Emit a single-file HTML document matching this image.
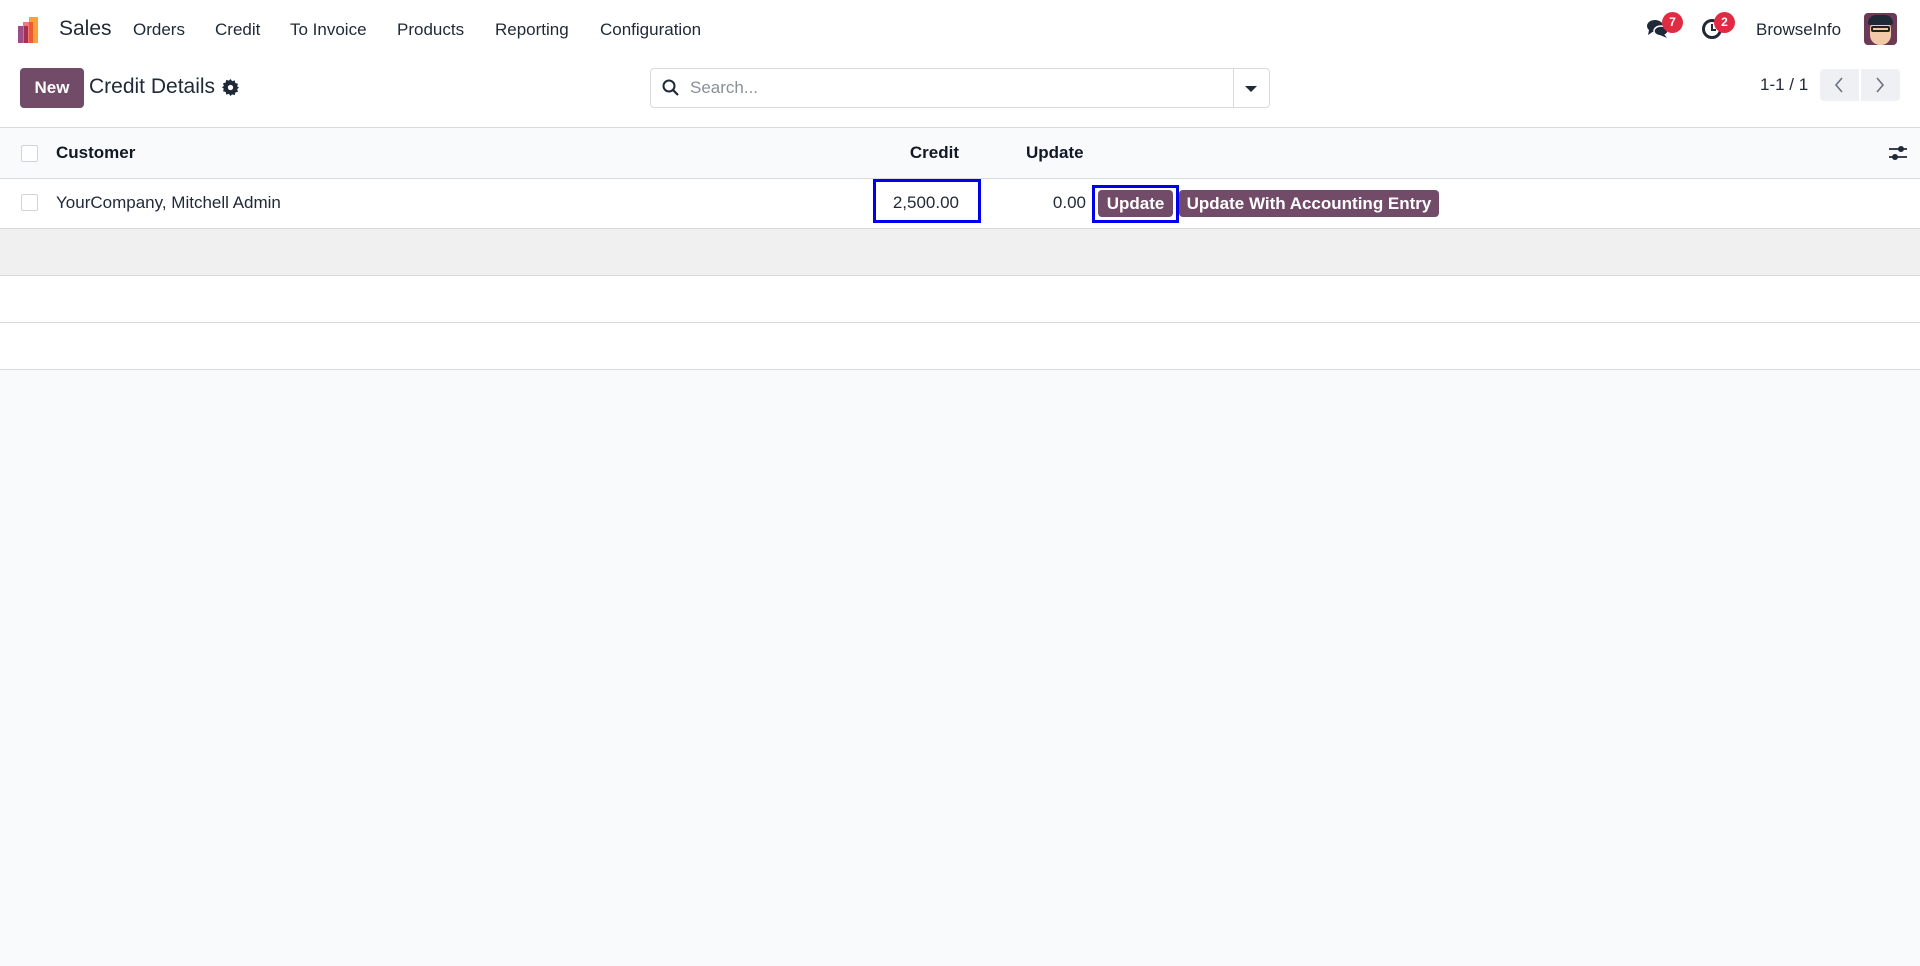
<!DOCTYPE html>
<html><head><meta charset="utf-8"><style>
*{box-sizing:border-box;margin:0;padding:0}
body{width:1920px;height:966px;background:#f9fafb;font-family:"Liberation Sans",sans-serif;color:#1f2937;position:relative;overflow:hidden}
.abs{position:absolute}
.top{left:0;top:0;width:1920px;height:128px;background:#fff;border-bottom:1px solid #d8dadd}
.nav{font-size:17px;color:#1f2937;top:20px}
.btn{background:#714b67;color:#fff;border-radius:4px;font-weight:bold}
.row{left:0;width:1920px;border-bottom:1px solid #d8dadd}
.cb{width:17px;height:17px;border:1px solid #d1d5db;border-radius:2px;background:#fff}
.badge{background:#e02c43;color:#fff;border-radius:50%;width:21px;height:21px;font-size:12px;font-weight:bold;text-align:center;line-height:21px}
</style></head><body>
<div class="abs top"></div>
<svg class="abs" style="left:18px;top:15px" width="30" height="30" viewBox="0 0 30 30">
<rect x="0" y="11" width="9" height="17" fill="#9b4f86"/>
<rect x="5" y="7" width="9" height="21" fill="#f06a6a" opacity=".9"/>
<rect x="11" y="2" width="9" height="26" fill="#f7a13b"/>
<rect x="6" y="11" width="4" height="17" fill="#a4324f"/>
<rect x="11" y="7" width="4" height="21" fill="#ef5a2f"/>
</svg>
<div class="abs" style="left:59px;top:17px;font-size:21px">Sales</div>
<div class="abs nav" style="left:133px">Orders</div>
<div class="abs nav" style="left:215px">Credit</div>
<div class="abs nav" style="left:290px">To Invoice</div>
<div class="abs nav" style="left:397px">Products</div>
<div class="abs nav" style="left:495px">Reporting</div>
<div class="abs nav" style="left:600px">Configuration</div>
<svg class="abs" style="left:1646px;top:18px" width="24" height="22" viewBox="0 0 24 22"><ellipse cx="9" cy="8" rx="8" ry="6" fill="#1f2937"/><path d="M3 12 L2 17 L8 13Z" fill="#1f2937"/><ellipse cx="15" cy="13" rx="7" ry="5" fill="#1f2937" stroke="#fff" stroke-width="1.5"/><path d="M18 16 L21 20 L14 17Z" fill="#1f2937"/></svg>
<div class="abs badge" style="left:1662px;top:12px">7</div>
<svg class="abs" style="left:1701px;top:18px" width="22" height="22" viewBox="0 0 22 22"><circle cx="11" cy="11" r="8.5" fill="none" stroke="#1f2937" stroke-width="3"/><path d="M11 6 V12 H15" fill="none" stroke="#1f2937" stroke-width="2"/></svg>
<div class="abs badge" style="left:1714px;top:12px">2</div>
<div class="abs" style="left:1756px;top:20px;font-size:17px">BrowseInfo</div>
<div class="abs" style="left:1864px;top:13px;width:33px;height:32px;border-radius:4px;background:#6b3a55;overflow:hidden">
<div class="abs" style="left:6px;top:6px;width:21px;height:26px;border-radius:10px;background:#f2c9a8"></div>
<div class="abs" style="left:4px;top:2px;width:25px;height:10px;border-radius:8px 8px 2px 2px;background:#1f2937"></div>
<div class="abs" style="left:7px;top:13px;width:19px;height:6px;border:2px solid #222;border-radius:2px"></div>
</div>
<div class="abs btn" style="left:20px;top:68px;width:64px;height:40px;font-size:17px;line-height:40px;text-align:center">New</div>
<div class="abs" style="left:89px;top:75px;font-size:21px">Credit Details</div>
<svg class="abs" style="left:222px;top:79px" width="17" height="17" viewBox="0 0 16 16"><path d="M8 0l1.5 2 2.5-.7.5 2.5 2.5.7-.7 2.5L16 8l-1.7 1.5.7 2.5-2.5.7-.5 2.5-2.5-.7L8 16l-1.5-2-2.5.7-.5-2.5-2.5-.7.7-2.5L0 8l1.7-1.5-.7-2.5 2.5-.7.5-2.5 2.5.7z" fill="#1f2937"/><circle cx="8" cy="8" r="2.5" fill="#fff"/></svg>
<div class="abs" style="left:650px;top:68px;width:620px;height:40px;border:1px solid #d8dadd;border-radius:4px;background:#fff"></div>
<div class="abs" style="left:1233px;top:69px;width:1px;height:38px;background:#d8dadd"></div>
<svg class="abs" style="left:662px;top:79px" width="18" height="18" viewBox="0 0 18 18"><circle cx="7" cy="7" r="5.5" fill="none" stroke="#1f2937" stroke-width="2"/><path d="M11 11 L16 16" stroke="#1f2937" stroke-width="2.2"/></svg>
<div class="abs" style="left:690px;top:78px;font-size:17px;color:#8a8f98">Search...</div>
<div class="abs" style="left:1245px;top:86px;border-left:6px solid transparent;border-right:6px solid transparent;border-top:6px solid #1f2937"></div>
<div class="abs" style="left:1760px;top:75px;font-size:17px">1-1 / 1</div>
<div class="abs" style="left:1820px;top:69px;width:39px;height:32px;background:#eef0f3;border-radius:4px 0 0 4px"></div>
<div class="abs" style="left:1861px;top:69px;width:39px;height:32px;background:#eef0f3;border-radius:0 4px 4px 0"></div>
<svg class="abs" style="left:1833px;top:76px" width="12" height="18"><path d="M9 2 L3 9 L9 16" fill="none" stroke="#6b7280" stroke-width="1.6"/></svg>
<svg class="abs" style="left:1874px;top:76px" width="12" height="18"><path d="M3 2 L9 9 L3 16" fill="none" stroke="#6b7280" stroke-width="1.6"/></svg>
<div class="abs row" style="top:129px;height:50px;background:#f9fafb"></div>
<div class="abs cb" style="left:21px;top:145px"></div>
<div class="abs" style="left:56px;top:143px;font-size:17px;font-weight:bold;color:#111827">Customer</div>
<div class="abs" style="left:860px;width:99px;text-align:right;top:143px;font-size:17px;font-weight:bold;color:#111827">Credit</div>
<div class="abs" style="left:1026px;top:143px;font-size:17px;font-weight:bold;color:#111827">Update</div>
<svg class="abs" style="left:1888px;top:144px" width="20" height="18" viewBox="0 0 20 18"><path d="M1 5H19M1 13H19" stroke="#1f2937" stroke-width="1.8"/><circle cx="13" cy="5" r="3" fill="#1f2937"/><circle cx="7" cy="13" r="3" fill="#1f2937"/></svg>
<div class="abs row" style="top:179px;height:50px;background:#fff"></div>
<div class="abs cb" style="left:21px;top:194px"></div>
<div class="abs" style="left:56px;top:193px;font-size:17px">YourCompany, Mitchell Admin</div>
<div class="abs" style="left:873px;top:179px;width:108px;height:44px;border:3px solid #0000ee"></div>
<div class="abs" style="left:860px;width:99px;text-align:right;top:193px;font-size:17px">2,500.00</div>
<div class="abs" style="left:1000px;width:86px;text-align:right;top:193px;font-size:17px">0.00</div>
<div class="abs" style="left:1092px;top:185px;width:87px;height:38px;border:3px solid #0000ee"></div>
<div class="abs btn" style="left:1098px;top:190px;width:75px;height:27px;font-size:17px;line-height:27px;text-align:center">Update</div>
<div class="abs btn" style="left:1179px;top:190px;width:260px;height:27px;font-size:17px;line-height:27px;text-align:center">Update With Accounting Entry</div>
<div class="abs row" style="top:229px;height:47px;background:#f0f0f0"></div>
<div class="abs row" style="top:276px;height:47px;background:#fff"></div>
<div class="abs row" style="top:323px;height:47px;background:#fff"></div>
</body></html>
